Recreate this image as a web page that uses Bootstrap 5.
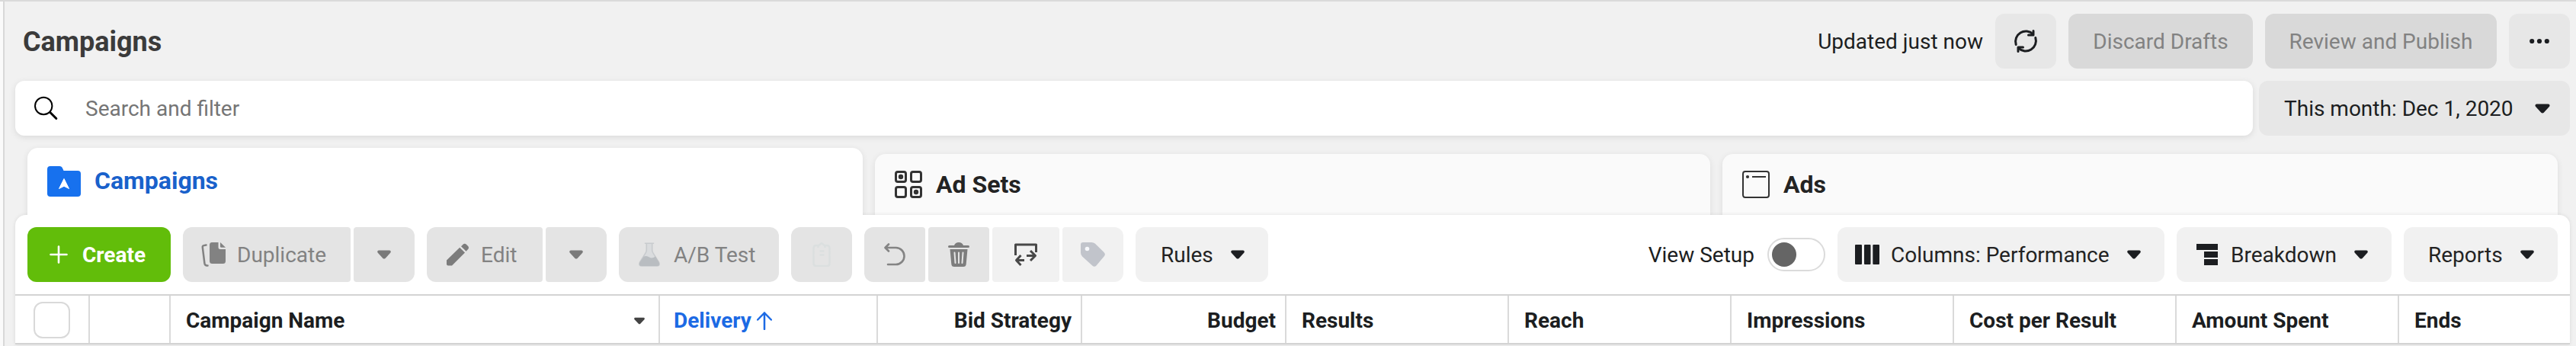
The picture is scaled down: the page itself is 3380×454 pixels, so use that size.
<!DOCTYPE html>
<html lang="en">
<head>
<meta charset="utf-8">
<title>Campaigns</title>
<link href="https://cdn.jsdelivr.net/npm/bootstrap@5.3.0/dist/css/bootstrap.min.css" rel="stylesheet">
<style>
  body { font: 400 28px/34px Roboto, "Liberation Sans", sans-serif; color: #1c1e21; background: #f1f1f1; overflow: hidden; }
  svg { display: block; flex: none; }
  .defs { display: none; }
  .shell { height: 454px; border-top: 2px solid #dadada; }
  .rail { width: 6px; background: #fafafa; border-right: 2px solid #d8d8d8; flex: none; }
  .main { padding: 16px 8px 0 14px; min-width: 0; }

  .title { font-size: 36px; line-height: 42px; font-weight: 700; color: #3b3b3b; padding: 1px 0 0 10px; }
  .stamp { margin-right: 16px; padding-top: 1px; }
  .btn { --bs-btn-font-size: 28px; --bs-btn-line-height: 34px; --bs-btn-border-width: 0; --bs-btn-border-radius: 12px;
         --bs-btn-padding-x: 0; --bs-btn-padding-y: 0; --bs-btn-color: #1c1e21; --bs-btn-disabled-opacity: 1;
         height: 72px; padding-top: 1px; display: flex; align-items: center; flex: none; white-space: nowrap; }
  .btn > svg { margin-bottom: 1px; }
  .btn-mid { --bs-btn-bg: #e7e7e7; --bs-btn-hover-bg: #e0e0e0; }
  .btn-off { --bs-btn-disabled-bg: #d9d9d9; --bs-btn-disabled-color: #828282; }
  .btn-dim { --bs-btn-disabled-bg: #e4e4e4; --bs-btn-disabled-color: #828282; }
  .btn-pale { --bs-btn-bg: #f1f1f1; --bs-btn-hover-bg: #eaeaea; --bs-btn-color: #232323; }
  .btn-create { --bs-btn-bg: #62bd0a; --bs-btn-hover-bg: #58ab08; --bs-btn-color: #fff; --bs-btn-hover-color: #fff; font-weight: 700; }
  .seg-start { border-radius: 12px 4px 4px 12px; }
  .seg-mid { border-radius: 4px; }
  .seg-end { border-radius: 4px 12px 12px 4px; }
  .gap-seg { gap: 4px; }
  .gap-set { gap: 16px; }

  .search { height: 72px; background: #fff; border-radius: 12px; box-shadow: 0 2px 8px rgba(0,0,0,.1); padding-left: 25px; color: #757575; }
  .search span { margin-left: 35px; padding-top: 1px; }
  .filters { margin-top: 16px; gap: 8px; }

  .tabs { padding: 0 16px; gap: 16px; margin-top: 16px; height: 88px; }
  .tab { flex: 1 1 0; height: 80px; background: #fafafa; border-radius: 14px 14px 0 0; font-size: 32px; font-weight: 700;
         padding-left: 26px; gap: 18px; box-shadow: 0 2px 8px rgba(0,0,0,.09); color: #232323; }
  .tab.current { height: 88px; background: #fff; color: #1961cb; position: relative; z-index: 1; clip-path: inset(-10px -10px 0 -10px); }
  .tab.current span { padding-bottom: 2px; }
  .panel { background: #fff; border-radius: 14px 14px 0 0; box-shadow: 0 0 5px rgba(0,0,0,.1); position: relative; }
  .tools { padding: 16px 16px; height: 104px; }

  .switch { width: 76px; height: 44px; border: 2px solid #dbdbdb; border-radius: 22px; padding: 4px; }
  .knob { width: 32px; height: 32px; border-radius: 50%; background: #656565; }

  .heads { height: 66px; border-top: 2px solid #d3d3d3; border-bottom: 2px solid #d3d3d3; font-weight: 700; }
  .th { border-right: 2px solid #dadada; padding: 3px 17px 0 20px; flex: none; display: flex; align-items: center; white-space: nowrap; }
  .th:last-child { border-right: 0; }
  .th.num { justify-content: flex-end; padding-right: 12px; }
  .th.w-check { width: 98px; padding: 2px 0 0 24px; } .w-blank { width: 106px; } .th.w-name { width: 642px; padding-right: 18px; }
  .th.w-delivery { width: 286px; padding-left: 18px; color: #1c6ae4; }
  .w-money { width: 268px; } .w-data { width: 292px; } .w-last { width: 224px; }
  .tick { width: 48px; height: 48px; border: 2px solid #d9d9d9; border-radius: 12px; background: #fff; }
</style>
<script src="https://cdn.jsdelivr.net/npm/bootstrap@5.3.0/dist/js/bootstrap.bundle.min.js"></script>
</head>
<body>
<svg class="defs">
  <defs>
    <linearGradient id="fade" x1="0" y1="0" x2="0" y2="1"><stop offset="0" stop-color="#dfe2e2"/><stop offset="1" stop-color="#b4b8ba"/></linearGradient>
    <symbol id="caret" viewBox="0 0 18 12"><path d="M2 0.5h14q1.8 0 1.8 1.8 0 .8-.6 1.5l-6.6 7.1q-1.6 1.4-3.2 0L.8 3.8Q.2 3.100 .2 2.300 .2.5 2 .5z"/></symbol>
  </defs>
</svg>
<div class="shell d-flex">
  <div class="rail"></div>
  <div class="main flex-grow-1 d-flex flex-column">
    <header class="d-flex align-items-center">
      <h1 class="title mb-0 me-auto">Campaigns</h1>
      <span class="stamp">Updated just now</span>
      <button class="btn btn-mid justify-content-center" style="width:80px">
        <svg width="32" height="32" viewBox="0 0 32 32" fill="none" stroke="#1c1e21" stroke-width="3" stroke-linecap="round" stroke-linejoin="round"><path d="M3.200 20.500A13.500 13.500 0 0 1 25.500 6.800M28.800 11.500A13.500 13.500 0 0 1 6.500 25.200"/><path d="M26 2.500V8h-6.500M6 29.500V24h6.500"/></svg>
      </button>
      <button class="btn btn-off justify-content-center" disabled style="width:242px;margin-left:16px">Discard Drafts</button>
      <button class="btn btn-off justify-content-center" disabled style="width:304px;margin-left:16px">Review and Publish</button>
      <button class="btn btn-mid justify-content-center" style="width:80px;margin-left:16px">
        <svg width="26" height="8" viewBox="0 0 26 8" fill="#1c1e21"><circle cx="3.200" cy="4" r="3.100"/><circle cx="13" cy="4" r="3.100"/><circle cx="22.800" cy="4" r="3.100"/></svg>
      </button>
    </header>

    <div class="filters d-flex">
      <div class="search flex-grow-1 d-flex align-items-center">
        <svg width="32" height="32" viewBox="0 0 32 32" fill="none" stroke="#000" stroke-linecap="round"><circle cx="12.200" cy="13" r="11.200" stroke-width="2"/><path d="M20.800 21.500l8 8" stroke-width="3"/></svg>
        <span>Search and filter</span>
      </div>
      <button class="btn btn-mid justify-content-between" style="width:408px;padding:1px 26px 0 33px">This month: Dec 1, 2020
        <svg width="20" height="13" fill="#1c1e21"><use href="#caret"/></svg></button>
    </div>

    <nav class="tabs d-flex align-items-end">
      <div class="tab current d-flex align-items-center">
        <svg width="44" height="40" viewBox="0 0 44 40"><path fill="#1771ee" d="M4 0h12q3 0 4.200 3l1.300 3H40q4 0 4 4v26q0 4-4 4H4q-4 0-4-4V4q0-4 4-4z"/><path fill="#fff" stroke="#fff" stroke-linejoin="round" d="M22 16.500l6.500 13-6.500-3.200-6.500 3.200z"/></svg>
        <span>Campaigns</span>
      </div>
      <div class="tab d-flex align-items-center">
        <svg width="36" height="36" viewBox="0 0 36 36" fill="none" stroke="#333" stroke-width="3"><rect x="1.500" y="1.500" width="13" height="13" rx="2.500"/><rect x="21.500" y="1.500" width="13" height="13" rx="2.500"/><rect x="1.500" y="21.500" width="13" height="13" rx="2.500"/><rect x="21.500" y="21.500" width="13" height="13" rx="2.500"/><g fill="#333" stroke="none"><circle cx="8" cy="8" r="3.200"/><circle cx="28" cy="28" r="3.200"/></g></svg>
        <span>Ad Sets</span>
      </div>
      <div class="tab d-flex align-items-center">
        <svg width="36" height="36" viewBox="0 0 36 36" fill="none" stroke="#333" stroke-width="2"><rect x="1" y="1" width="34" height="34" rx="3"/><path d="M13 8h18" /><circle cx="7" cy="8" r="2.100" fill="#333" stroke="none"/></svg>
        <span>Ads</span>
      </div>
    </nav>

    <section class="panel">
      <div class="tools d-flex align-items-center gap-set">
        <button class="btn btn-create" style="width:188px;padding-left:29px">
          <svg width="24" height="24" viewBox="0 0 24 24" stroke="#fff" stroke-width="2.600" stroke-linecap="round"><path d="M1.500 12h21M12 1.500v21"/></svg>
          <span style="margin-left:19px">Create</span>
        </button>
        <div class="d-flex gap-seg">
          <button class="btn btn-dim seg-start" disabled style="width:220px;padding-left:24px">
            <svg width="33" height="34" viewBox="0 0 33 34" fill="#828282"><path d="M14 1h8.500v6.500q0 2.500 2.500 2.500h7v15.500q0 3.500-3.500 3.500H14.500q-3.500 0-3.500-3.500V4.500Q11 1 14 1z"/><path d="M25 1l7 6.800h-5.500q-1.500 0-1.500-1.500z"/><path d="M6.500 4.500l-3 .6q-2 .5-1.700 2.400l2.600 21q.4 2.500 2.700 3h1.400" fill="none" stroke="#828282" stroke-width="2.500" stroke-linecap="round"/></svg>
            <span style="margin-left:14px">Duplicate</span>
          </button>
          <button class="btn btn-dim seg-end justify-content-center" disabled style="width:80px"><svg width="18" height="12" fill="#7a7a7a"><use href="#caret"/></svg></button>
        </div>
        <div class="d-flex gap-seg">
          <button class="btn btn-dim seg-start" disabled style="width:152px;padding-left:26px">
            <svg width="30" height="30" viewBox="0 0 30 30" fill="#7c7c7c"><path d="M0 22.500L17.200 5.800l6.800 6.800L7 29.500H2Q0 29.500 0 27.500z"/><path d="M19 4.200l2.500-2.500q2.200-2 4.400 0l2 2q2.200 2.200 0 4.500l-2.300 2.500z"/></svg>
            <span style="margin-left:15px">Edit</span>
          </button>
          <button class="btn btn-dim seg-end justify-content-center" disabled style="width:80px"><svg width="18" height="12" fill="#7a7a7a"><use href="#caret"/></svg></button>
        </div>
        <button class="btn btn-dim" disabled style="width:210px;padding-left:26px">
          <svg width="28" height="32" viewBox="0 0 28 32"><path d="M8.500 1.200h11M10.300 2v8q0 2-1 3.600L1.500 26q-2 5 3 5h19q5 0 3-5L18.700 13.600q-1-1.600-1-3.600V2" fill="#dadcde" stroke="#c8cbce" stroke-width="1.600" stroke-linecap="round"/><path d="M6.800 18.500q4-1.500 7.200 1t8-1L26.500 26q2 5-3 5h-19q-5 0-3-5z" fill="#b9bdc1"/></svg>
          <span style="margin-left:18px">A/B Test</span>
        </button>
        <button class="btn btn-dim justify-content-center" disabled style="width:80px">
          <svg width="24" height="32" viewBox="0 0 24 32" fill="none" stroke="#dbdfdf" stroke-width="2.400"><path d="M7.500 4H5Q1.500 4 1.500 7.500v20Q1.500 31 5 31h14q3.500 0 3.500-3.500v-20Q22.500 4 19 4h-2.500M7.500 7V4.500L12 1l4.500 3.500V7M9.500 11.500h6M9.500 16.500h6"/></svg>
        </button>
        <div class="d-flex gap-seg">
          <button class="btn btn-dim seg-start justify-content-center" disabled style="width:80px">
            <svg width="28" height="30" viewBox="0 0 28 30" fill="none" stroke="#848484" stroke-width="2.600" stroke-linecap="round" stroke-linejoin="round"><path d="M6 1.500L1.500 6 6 10.500M2 6h13.500a11 11 0 0 1 0 22H5"/></svg>
          </button>
          <button class="btn btn-dim seg-mid justify-content-center" disabled style="width:80px">
            <svg width="28" height="32" viewBox="0 0 28 32" fill="#7d7d7d"><path d="M1.500 4H8q1.500-4 6-4t6 4h6.500q1.500 0 1.500 1.500T26.500 7h-25Q0 7 0 5.500T1.500 4z"/><path d="M2.500 9h23l-1.800 19.500q-.3 3.500-3.700 3.500H8q-3.400 0-3.700-3.500z"/><path d="M8.500 13.500L9.500 27M14 13.500V27M19.500 13.500L18.500 27" stroke="#e4e4e4" stroke-width="2" stroke-linecap="round"/></svg>
          </button>
          <button class="btn btn-pale seg-mid justify-content-center" style="width:88px">
            <svg width="32" height="32" viewBox="0 0 32 32" fill="none" stroke="#484848" stroke-width="3" stroke-linejoin="round"><path d="M2.500 17V3h27v10"/><path d="M9.500 17L3.500 23.500l6 6.500M4 23.500h10M22 11l6.500 6.500-6.500 6.500M28 17.500H17"/></svg>
          </button>
          <button class="btn btn-pale seg-end justify-content-center" style="width:80px">
            <svg width="32" height="32" viewBox="0 0 32 32"><path fill="#c1c4cb" d="M3 0h11q3 0 5 1.800L30.500 13q2.500 2.500.5 5L20.500 30.500q-2.500 2.500-5 .2L2 18.500q-2-2-2-5V3q0-3 3-3z"/><circle cx="8.500" cy="8.500" r="2.800" fill="#f6f8fb"/></svg>
          </button>
        </div>
        <button class="btn btn-pale" style="width:174px;padding-left:33px">Rules
          <svg width="18" height="12" fill="#1c1e21" style="margin-left:23px"><use href="#caret"/></svg></button>

        <div class="d-flex align-items-center ms-auto">
          <span style="margin-right:17px;padding-top:1px">View Setup</span>
          <div class="switch"><div class="knob"></div></div>
        </div>
        <button class="btn btn-pale" style="width:429px;padding-left:23px">
          <svg width="32" height="26" viewBox="0 0 32 26" fill="#1c1e21"><rect width="9" height="26" rx="1"/><rect x="12" width="8.500" height="26" rx="1"/><rect x="23.300" width="8.700" height="26" rx="1"/></svg>
          <span style="margin-left:15px">Columns: Performance</span>
          <svg width="18" height="12" fill="#1c1e21" style="margin-left:23px"><use href="#caret"/></svg>
        </button>
        <button class="btn btn-pale" style="width:282px;padding-left:26px">
          <svg width="28" height="28" viewBox="0 0 28 28" fill="#1c1e21"><path d="M0 0h28v8H0zM10 10h18v8H10zM10 20h18v8H10z"/></svg>
          <span style="margin-left:17px">Breakdown</span>
          <svg width="18" height="12" fill="#1c1e21" style="margin-left:23px"><use href="#caret"/></svg>
        </button>
        <button class="btn btn-pale" style="width:202px;padding-left:32px">Reports
          <svg width="18" height="12" fill="#1c1e21" style="margin-left:23px"><use href="#caret"/></svg></button>
      </div>

      <div class="heads d-flex">
        <div class="th w-check"><div class="tick"></div></div>
        <div class="th w-blank"></div>
        <div class="th w-name justify-content-between">Campaign Name <svg width="14" height="10" fill="#444"><use href="#caret"/></svg></div>
        <div class="th w-delivery">Delivery
          <svg width="20" height="24" viewBox="0 0 20 24" fill="none" stroke="#1c6ae4" stroke-width="2.500" stroke-linecap="round" stroke-linejoin="round" style="margin-left:7px"><path d="M10 23V1.500M1.200 10.500L10 1.500l8.800 9"/></svg></div>
        <div class="th w-money num">Bid Strategy</div>
        <div class="th w-money num">Budget</div>
        <div class="th w-data justify-content-between">Results <svg width="14" height="10" fill="url(#fade)"><use href="#caret"/></svg></div>
        <div class="th w-data justify-content-between">Reach <svg width="14" height="10" fill="url(#fade)"><use href="#caret"/></svg></div>
        <div class="th w-data justify-content-between">Impressions <svg width="14" height="10" fill="url(#fade)"><use href="#caret"/></svg></div>
        <div class="th w-data justify-content-between">Cost per Result <svg width="14" height="10" fill="url(#fade)"><use href="#caret"/></svg></div>
        <div class="th w-data justify-content-between">Amount Spent <svg width="14" height="10" fill="url(#fade)"><use href="#caret"/></svg></div>
        <div class="th w-last justify-content-between">Ends <svg width="14" height="10" fill="url(#fade)"><use href="#caret"/></svg></div>
      </div>
    </section>
  </div>
</div>
</body>
</html>
